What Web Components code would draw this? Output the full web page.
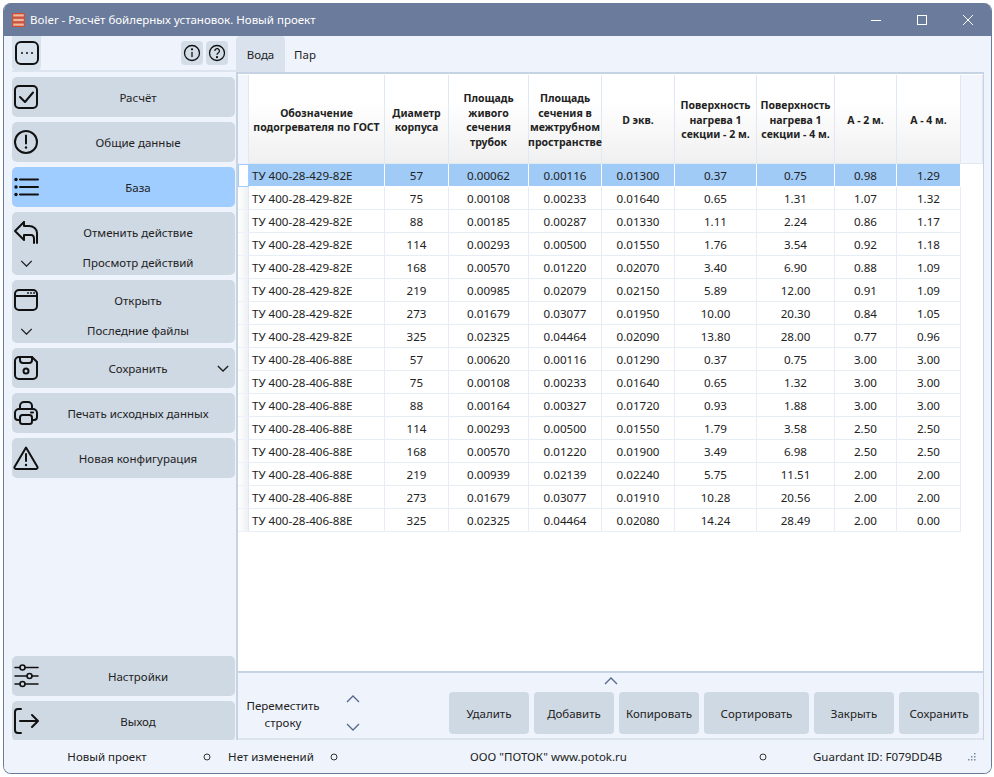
<!DOCTYPE html>
<html lang="ru">
<head>
<meta charset="utf-8">
<title>Boler</title>
<style>
html,body{margin:0;padding:0;background:#fff;}
body{font-family:"Noto Sans","Open Sans",sans-serif;font-size:11.5px;color:#222;}
</style>
</head>
<body>
<boler-window>
  <title-bar slot="title">Boler - Расчёт бойлерных установок. Новый проект</title-bar>
  <side-panel slot="side"></side-panel>
  <tab-strip slot="tabs"></tab-strip>
  <data-grid slot="grid"></data-grid>
  <action-bar slot="actions"></action-bar>
  <status-bar slot="status"></status-bar>
</boler-window>
<script>
const font_stack = `"Noto Sans","Open Sans",sans-serif`;

const dot = (x, y, r) => `<circle cx="${x}" cy="${y}" r="${r}" fill="#111" stroke="none"/>`;

const icons = {
    dots: `<rect x="2" y="2" width="22" height="22" rx="5"/>${dot(8, 13, 1)}${dot(13, 13, 1)}${dot(18, 13, 1)}`,
    check: `<rect x="2" y="2" width="22" height="22" rx="4"/><path d="M7 13l5 5 8-9.500"/>`,
    alert: `<circle cx="13" cy="13" r="11"/><path d="M13 6.500v8"/>${dot(13, 18.500, 1.200)}`,
    list: `<path d="M7 5.500h18M7 13h18M7 20.500h18"/>${dot(3, 5.500, 1.700)}${dot(3, 13, 1.700)}${dot(3, 20.500, 1.700)}`,
    undo: `<path d="M11 2L2 11l9 9v-5h7c2 0 3 1.500 3 4v4"/><path d="M11 2v4h5c4.500 0 8 3 8 7v10"/>`,
    open: `<rect x="2" y="2" width="22" height="20" rx="4"/><path d="M2 8h22"/>${dot(15, 5, .9)}${dot(18, 5, .9)}${dot(21, 5, .9)}`,
    save: `<path d="M6 2h13l5 5v13a4 4 0 0 1-4 4H6a4 4 0 0 1-4-4V6a4 4 0 0 1 4-4z"/><path d="M7 2v3a3 3 0 0 0 3 3h6a3 3 0 0 0 3-3V2"/><circle cx="13" cy="16" r="2.500"/>`,
    print: `<path d="M7 9V6a4 4 0 0 1 4-4h4a4 4 0 0 1 4 4v3"/><path d="M7 20H5a3 3 0 0 1-3-3v-4a4 4 0 0 1 4-4h14a4 4 0 0 1 4 4v4a3 3 0 0 1-3 3h-2"/><rect x="7" y="15" width="12" height="9" rx="2.500"/><path d="M18 12.500h2"/>`,
    warn: `<path d="M13 2.500L24.500 22a1.500 1.500 0 0 1-1.300 2H2.800a1.500 1.500 0 0 1-1.300-2z"/><path d="M13 9v7"/>${dot(13, 20, 1.200)}`,
    sliders: `<path d="M2 4.500h5M12 4.500h13M2 13h12M19 13h6M2 21h5M12 21h13" stroke-width="1.600"/><circle cx="9.500" cy="4.500" r="2.500" stroke-width="1.600"/><circle cx="16.500" cy="13" r="2.500" stroke-width="1.600"/><circle cx="9.500" cy="21" r="2.500" stroke-width="1.600"/>`,
    exit: `<path d="M8 1H5a3 3 0 0 0-3 3v18a3 3 0 0 0 3 3h3"/><path d="M7 13h18M19 7l6 6-6 6"/>`
};

const chevron = (dir, color, w, h, sw) => {
    const d = dir === 'up' ? 'M1 7l6-6 6 6' : 'M1 1l6 6 6-6';
    return `<svg width="${w}" height="${h}" viewBox="0 0 14 8" fill="none" stroke="${color}" stroke-width="${sw || 1.300}"><path d="${d}"/></svg>`;
};

class BolerWindow extends HTMLElement{
    constructor(){
        super();
        this.attachShadow({mode: 'open'}).innerHTML = `
<style>
:host{
    display: block;
    box-sizing: border-box;
    width: 994px;
    height: 777px;
    padding: 3px 2px 3px 3px;
    font-family: ${font_stack};
}
.frame{
    height: 100%;
    box-sizing: border-box;
    border: 1px solid #6b7b9b;
    border-top: 0;
    border-radius: 8px;
    background: #eff4fc;
    overflow: hidden;
    display: grid;
    grid-template-columns: 232px 1fr;
    grid-template-rows: 33px 36px 1fr 33px;
    grid-template-areas: "title title" "side tabs" "side main" "status status";
}
.title{grid-area: title;}
.side{grid-area: side; min-height: 0;}
.tabs{grid-area: tabs;}
.main{
    grid-area: main;
    display: flex;
    flex-direction: column;
    min-height: 0;
    margin-right: 7px;
    border-top: 2px solid #c5d3e3;
    border-left: 2px solid #c5d3e3;
    border-right: 1px solid #c5d3e3;
}
.status{grid-area: status;}
</style>
<div class="frame">
    <div class="title"><slot name="title"></slot></div>
    <div class="side"><slot name="side"></slot></div>
    <div class="tabs"><slot name="tabs"></slot></div>
    <div class="main"><slot name="grid"></slot><slot name="actions"></slot></div>
    <div class="status"><slot name="status"></slot></div>
</div>`;
    }
}
customElements.define('boler-window', BolerWindow);

class TitleBar extends HTMLElement{
    constructor(){
        super();
        this.attachShadow({mode: 'open'}).innerHTML = `
<style>
:host{
    display: flex;
    align-items: center;
    height: 33px;
    background: #6b7b9b;
    color: #fff;
    font-size: 11.500px;
}
.logo{margin: 0 5px 0 8px; flex: none;}
.text{flex: 1; white-space: nowrap;}
.btns{display: flex; align-self: stretch;}
.btns div{width: 46px; display: flex; align-items: center; justify-content: center;}
</style>
<svg class="logo" width="13" height="14" viewBox="0 0 13 14">
    <rect x=".6" y=".6" width="11.800" height="3.600" rx="1" fill="#e9b9a2" stroke="#d5492e" stroke-width="1.200"/>
    <rect x=".6" y="5.200" width="11.800" height="3.600" rx="1" fill="#e9b9a2" stroke="#d5492e" stroke-width="1.200"/>
    <rect x=".6" y="9.800" width="11.800" height="3.600" rx="1" fill="#e9b9a2" stroke="#d5492e" stroke-width="1.200"/>
</svg>
<div class="text"><slot></slot></div>
<div class="btns">
    <div><svg width="12" height="12"><path d="M1 6.500h10" stroke="#fff"/></svg></div>
    <div><svg width="12" height="12"><rect x="1.500" y="1.500" width="9" height="9" fill="none" stroke="#fff"/></svg></div>
    <div><svg width="12" height="12"><path d="M1 1l10 10M11 1L1 11" stroke="#fff" fill="none"/></svg></div>
</div>`;
    }
}
customElements.define('title-bar', TitleBar);

class SideButton extends HTMLElement{
    constructor(){
        super();
        const icon = icons[this.getAttribute('icon')];
        const sub = this.getAttribute('sub');
        const caret = this.hasAttribute('caret');
        this.attachShadow({mode: 'open'}).innerHTML = `
<style>
:host{
    display: block;
    width: 223px;
    border-radius: 5px;
    background: #cfd9e4;
    color: #222;
    font-size: 11.500px;
}
:host([active]){background: #a0cdff;}
.row{height: 40px; display: grid; grid-template-columns: 27px 1fr 24px; align-items: center;}
:host([sub]) .row.a{height: 42px;}
:host([sub]) .row.a .lbl{padding-bottom: 2px;}
:host([sub]) .row.b{height: 21px; align-items: start;}
.row.a svg.ic{margin-left: 1px;}
.lbl{text-align: center; white-space: nowrap; padding-left: 26px;}
svg.ic{fill: none; stroke: #111; stroke-width: 2; stroke-linecap: round; stroke-linejoin: round; display: block;}
.car{display: flex; justify-content: center;}
.b .car{padding-top: 6px; margin-left: 1px;}
.a .car{margin-left: -1px;}
.b .lbl{line-height: 16px; padding-top: 1px;}
</style>
<div class="row a">
    <svg class="ic" width="26" height="26" viewBox="0 0 26 26">${icon}</svg>
    <div class="lbl"><slot></slot></div>
    ${caret ? `<div class="car">${chevron('down', '#222', 12, 7, 1.600)}</div>` : ''}
</div>
${sub ? `<div class="row b"><div class="car">${chevron('down', '#222', 13, 7, 1.600)}</div><div class="lbl">${sub}</div><div></div></div>` : ''}`;
    }
}
customElements.define('side-button', SideButton);

class SidePanel extends HTMLElement{
    constructor(){
        super();
        this.attachShadow({mode: 'open'}).innerHTML = `
<style>
:host{display: flex; flex-direction: column; height: 100%; padding-left: 8px; box-sizing: border-box;}
.top{height: 36px; display: flex; align-items: flex-start; border-bottom: 2px solid #dbe4ef; box-sizing: border-box; flex: none; margin-bottom: 5px;}
.menu{width: 29px; height: 34px; border-radius: 0 0 4px 4px; background: #d9e3ee; display: flex; align-items: center; justify-content: center;}
.menu svg{fill: none; stroke: #111; stroke-width: 2; stroke-linejoin: round;}
.sp{flex: 1;}
.ib{width: 22px; height: 24px; margin: 5px 3px 0 0; border-radius: 4px; background: #d3dde8; display: flex; align-items: center; justify-content: center;}
.ib:last-child{margin-right: 8px;}
.list{display: flex; flex-direction: column; gap: 5px; flex: 1; margin-bottom: -1px;}
.sp2{flex: 1;}
</style>
<div class="top">
    <div class="menu"><svg width="26" height="26" viewBox="0 0 26 26">${icons.dots}</svg></div>
    <div class="sp"></div>
    <div class="ib"><svg width="18" height="18" viewBox="0 0 18 18" fill="none" stroke="#111" stroke-width="1.300"><circle cx="9" cy="9" r="7.500"/><path d="M9 8v5"/><circle cx="9" cy="5.300" r=".5" fill="#111"/></svg></div>
    <div class="ib"><svg width="18" height="18" viewBox="0 0 18 18" fill="none" stroke="#111" stroke-width="1.300"><circle cx="9" cy="9" r="7.500"/><path d="M6.800 7a2.300 2.300 0 1 1 3.400 2c-.8.500-1.200.9-1.200 1.800"/><circle cx="9" cy="13.200" r=".5" fill="#111"/></svg></div>
</div>
<div class="list">
    <side-button icon="check">Расчёт</side-button>
    <side-button icon="alert">Общие данные</side-button>
    <side-button icon="list" active>База</side-button>
    <side-button icon="undo" sub="Просмотр действий">Отменить действие</side-button>
    <side-button icon="open" sub="Последние файлы">Открыть</side-button>
    <side-button icon="save" caret>Сохранить</side-button>
    <side-button icon="print">Печать исходных данных</side-button>
    <side-button icon="warn">Новая конфигурация</side-button>
    <div class="sp2"></div>
    <side-button icon="sliders">Настройки</side-button>
    <side-button icon="exit">Выход</side-button>
</div>`;
    }
}
customElements.define('side-panel', SidePanel);

class TabStrip extends HTMLElement{
    constructor(){
        super();
        this.attachShadow({mode: 'open'}).innerHTML = `
<style>
:host{display: flex; height: 36px; font-size: 11.500px; color: #222;}
div{height: 100%; display: flex; align-items: center; justify-content: center; box-sizing: border-box;}
.on{width: 49px; background: #d9e2ed; border-radius: 4px 4px 0 0;}
.off{width: 40px;}
</style>
<div class="on">Вода</div><div class="off">Пар</div>`;
    }
}
customElements.define('tab-strip', TabStrip);

const grid_cols = [11, 136, 64, 80, 73, 73, 82, 78, 62, 64];
const grid_heads = [
    'Обозначение<br>подогревателя по ГОСТ', 'Диаметр<br>корпуса', 'Площадь<br>живого<br>сечения<br>трубок',
    'Площадь<br>сечения в<br>межтрубном<br>пространстве', 'D экв.', 'Поверхность<br>нагрева 1<br>секции - 2 м.',
    'Поверхность<br>нагрева 1<br>секции - 4 м.', 'А - 2 м.', 'А - 4 м.'
];
const grid_rows = [
    ['ТУ 400-28-429-82Е','57','0.00062','0.00116','0.01300','0.37','0.75','0.98','1.29'],
    ['ТУ 400-28-429-82Е','75','0.00108','0.00233','0.01640','0.65','1.31','1.07','1.32'],
    ['ТУ 400-28-429-82Е','88','0.00185','0.00287','0.01330','1.11','2.24','0.86','1.17'],
    ['ТУ 400-28-429-82Е','114','0.00293','0.00500','0.01550','1.76','3.54','0.92','1.18'],
    ['ТУ 400-28-429-82Е','168','0.00570','0.01220','0.02070','3.40','6.90','0.88','1.09'],
    ['ТУ 400-28-429-82Е','219','0.00985','0.02079','0.02150','5.89','12.00','0.91','1.09'],
    ['ТУ 400-28-429-82Е','273','0.01679','0.03077','0.01950','10.00','20.30','0.84','1.05'],
    ['ТУ 400-28-429-82Е','325','0.02325','0.04464','0.02090','13.80','28.00','0.77','0.96'],
    ['ТУ 400-28-406-88Е','57','0.00620','0.00116','0.01290','0.37','0.75','3.00','3.00'],
    ['ТУ 400-28-406-88Е','75','0.00108','0.00233','0.01640','0.65','1.32','3.00','3.00'],
    ['ТУ 400-28-406-88Е','88','0.00164','0.00327','0.01720','0.93','1.88','3.00','3.00'],
    ['ТУ 400-28-406-88Е','114','0.00293','0.00500','0.01550','1.79','3.58','2.50','2.50'],
    ['ТУ 400-28-406-88Е','168','0.00570','0.01220','0.01900','3.49','6.98','2.50','2.50'],
    ['ТУ 400-28-406-88Е','219','0.00939','0.02139','0.02240','5.75','11.51','2.00','2.00'],
    ['ТУ 400-28-406-88Е','273','0.01679','0.03077','0.01910','10.28','20.56','2.00','2.00'],
    ['ТУ 400-28-406-88Е','325','0.02325','0.04464','0.02080','14.24','28.49','2.00','0.00']
];

class DataGrid extends HTMLElement{
    constructor(){
        super();
        const head = `<div class="hc rh"></div>` + grid_heads.map(h => `<div class="hc">${h}</div>`).join('') + `<div class="hc fill"></div>`;
        const body = grid_rows.map((r, i) => `<div class="rh ${i === 0 ? 'cur' : ''}"></div>` +
            r.map((c, j) => `<div class="c ${j === 0 ? 'first' : ''} ${i === 0 ? 'sel' : ''}">${c}</div>`).join('') + `<div class="end"></div>`).join('');
        this.attachShadow({mode: 'open'}).innerHTML = `
<style>
:host{display: block; flex: 1; min-height: 0; background: #fff; font-size: 11.600px; color: #222; padding-top: 1px;}
.g{
    display: grid;
    grid-template-columns: ${grid_cols.map(w => w + 'px').join(' ')} 22px;
    grid-template-rows: 89px repeat(${grid_rows.length}, 23px);
}
.hc{
    background: linear-gradient(#fff 30%, #f0f0f0);
    border-right: 1px solid #dfe8f3;
    border-bottom: 1px solid #dfe8f3;
    font-weight: 700;
    font-size: 10.500px;
    line-height: 14.500px;
    display: flex;
    align-items: center;
    justify-content: center;
    text-align: center;
    white-space: nowrap;
    box-sizing: border-box;
    padding-top: 2px;
}
.hc.fill{background: #f2f6fc;}
.rh{border-right: 1px solid #dfe8f3; border-bottom: 1px solid #eef2f8; background: linear-gradient(90deg,#fff,#eef0f2); box-sizing: border-box;}
.rh.hc{background: #f2f6fc;}
.rh.cur{background: #fff; border: 1px solid #a0cdff;}
.c{
    border-right: 1px solid #e6edf6;
    border-bottom: 1px solid #e6edf6;
    display: flex;
    align-items: center;
    justify-content: center;
    box-sizing: border-box;
    white-space: nowrap;
}
.c.first{justify-content: flex-start; padding-left: 3px;}
.c.sel{background: #a0cbf6; border-color: #fff;}
</style>
<div class="g">${head}${body}</div>`;
    }
}
customElements.define('data-grid', DataGrid);

class ActionBar extends HTMLElement{
    constructor(){
        super();
        const btns = [['Удалить', 80], ['Добавить', 80], ['Копировать', 80], ['Сортировать', 105], ['Закрыть', 80], ['Сохранить', 80]];
        this.attachShadow({mode: 'open'}).innerHTML = `
<style>
:host{
    display: grid;
    grid-template-columns: 211px 1fr;
    grid-template-rows: 19px 42px;
    height: 69px;
    box-sizing: border-box;
    border-top: 2px solid #c5d3e3;
    border-bottom: 2px solid #dbe4ef;
    background: #eff4fc;
    font-size: 11.500px;
    color: #222;
    flex: none;
}
.move{grid-row: 1 / 3; display: flex; align-items: flex-start;}
.mt{width: 90px; text-align: center; line-height: 16.500px; margin-top: 25px;}
.ar{display: flex; flex-direction: column; gap: 20px; margin: 22px 0 0 18px;}
.ar svg{display: block;}
.up{grid-column: 2; grid-row: 1; position: relative; height: 19px;}
.up svg{position: absolute; left: 155px; top: 4px;}
.btns{grid-column: 2; grid-row: 2; display: flex; gap: 5px;}
.btns div{height: 42px; border-radius: 4px; background: #cfd9e4; display: flex; align-items: center; justify-content: center; white-space: nowrap;}
</style>
<div class="move">
    <div class="mt">Переместить<br>строку</div>
    <div class="ar">${chevron('up', '#55678a', 14, 8)}${chevron('down', '#55678a', 14, 8)}</div>
</div>
<div class="up">${chevron('up', '#55678a', 14, 8)}</div>
<div class="btns">${btns.map(b => `<div style="width:${b[1]}px">${b[0]}</div>`).join('')}</div>`;
    }
}
customElements.define('action-bar', ActionBar);

class StatusBar extends HTMLElement{
    constructor(){
        super();
        const dot = `<svg width="8" height="8"><circle cx="4" cy="4" r="3" fill="none" stroke="#333"/></svg>`;
        this.attachShadow({mode: 'open'}).innerHTML = `
<style>
:host{
    display: grid;
    grid-template-columns: 198px 10px 118px 8px 421px 8px 1fr;
    height: 33px;
    align-items: center;
    font-size: 11.500px;
    color: #222;
    background: #eff4fc;
}
.a{text-align: center; white-space: nowrap;}
.d{display: flex; justify-content: center;}
.end{display: flex; align-items: center; padding: 0 15px 0 46px;}
.end span{flex: 1; white-space: nowrap;}
</style>
<div class="a" style="padding-left:8px">Новый проект</div>
<div class="d">${dot}</div>
<div class="a">Нет изменений</div>
<div class="d">${dot}</div>
<div class="a">ООО "ПОТОК" www.potok.ru</div>
<div class="d">${dot}</div>
<div class="end"><span>Guardant ID: F079DD4B</span>
<svg width="8" height="8" fill="#7a8aa0"><rect x="6" y="0" width="1.500" height="1.500"/><rect x="3" y="3" width="1.500" height="1.500"/><rect x="6" y="3" width="1.500" height="1.500"/><rect x="0" y="6" width="1.500" height="1.500"/><rect x="3" y="6" width="1.500" height="1.500"/><rect x="6" y="6" width="1.500" height="1.500"/></svg></div>`;
    }
}
customElements.define('status-bar', StatusBar);
</script>
</body>
</html>
